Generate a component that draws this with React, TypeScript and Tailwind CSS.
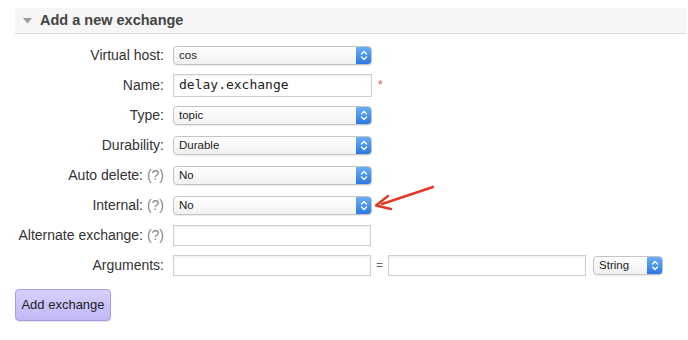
import React from "react";

const font = { fontFamily: '"Liberation Sans", Arial, sans-serif' };

function Chevrons() {
    return (
        <svg width="8" height="11" viewBox="0 0 8 11" fill="none" stroke="white" strokeWidth="1.4" strokeLinecap="round" strokeLinejoin="round">
            <path d="M1.5 4 L4 1.5 L6.5 4" />
            <path d="M1.5 7 L4 9.5 L6.5 7" />
        </svg>
    );
}

function FakeSelect({ value, width = "w-[199px]" }: { value: string; width?: string }) {
    return (
        <div className={`${width} h-[19px] flex items-stretch rounded-[4px] border border-[#c4c4c4] bg-gradient-to-b from-white to-[#f1f1f1] shadow-[0_1px_1px_rgba(0,0,0,0.08)] overflow-hidden`}>
            <div className="flex-1 pl-[5px] text-[11.5px] leading-[17px] text-[#222]">{value}</div>
            <div className="w-[15px] flex items-center justify-center bg-gradient-to-b from-[#69aef8] to-[#2a78e4]">
                <Chevrons />
            </div>
        </div>
    );
}

function TextBox({ value, width = "w-[199px]", height = "h-[21px]" }: { value?: string; width?: string; height?: string }) {
    return (
        <div className={`${width} ${height} border border-[#cfcfcf] shadow-[inset_0_1px_2px_rgba(0,0,0,0.08)] bg-white pl-[5px] flex items-center`}>
            {value && (
                <span className="text-[13px] text-[#222]" style={{ fontFamily: '"DejaVu Sans Mono", "Liberation Mono", monospace' }}>
                    {value}
                </span>
            )}
        </div>
    );
}

function Row({ label, help, children }: { label: string; help?: boolean; children: React.ReactNode }) {
    return (
        <div className="h-[30px] flex items-center">
            <div className="w-[149px] text-right text-[14px] text-[#333] whitespace-nowrap">
                {label}
                {help && <span className="text-[#888]"> (?)</span>}
            </div>
            <div className="ml-[9px] flex items-center">{children}</div>
        </div>
    );
}

export default function App() {
    return (
        <div className="relative w-[688px] h-[340px] bg-white overflow-hidden" style={font}>
            {/* Section header */}
            <div className="mt-[8px] ml-[15px] mr-[2px] h-[26px] bg-[#f6f6f6] border-b border-[#dcdcdc] flex items-center">
                <svg width="9" height="6" viewBox="0 0 9 6" className="ml-[8px]">
                    <path d="M0 0 L9 0 L4.5 5.5 Z" fill="#9a9a9a" />
                </svg>
                <span className="ml-[8px] text-[14.5px] font-bold text-[#444]">Add a new exchange</span>
            </div>

            {/* Form */}
            <div className="mt-[6px] ml-[15px]">
                <Row label="Virtual host:">
                    <FakeSelect value="cos" />
                </Row>
                <Row label="Name:">
                    <TextBox value="delay.exchange" height="h-[23px]" />
                    <span className="ml-[6px] text-[12px] text-[#e05555]">*</span>
                </Row>
                <Row label="Type:">
                    <FakeSelect value="topic" />
                </Row>
                <Row label="Durability:">
                    <FakeSelect value="Durable" />
                </Row>
                <Row label="Auto delete:" help>
                    <FakeSelect value="No" />
                </Row>
                <Row label="Internal:" help>
                    <FakeSelect value="No" />
                </Row>
                <Row label="Alternate exchange:" help>
                    <TextBox width="w-[198px]" />
                </Row>
                <Row label="Arguments:">
                    <TextBox width="w-[198px]" />
                    <span className="mx-[5px] text-[12px] text-[#666]">=</span>
                    <TextBox width="w-[198px]" />
                    <div className="ml-[7px]">
                        <FakeSelect value="String" width="w-[70px]" />
                    </div>
                </Row>

                <button className="mt-[9px] w-[96px] h-[32px] rounded-[4px] border border-[#a99ce2] bg-gradient-to-b from-[#d6d0fc] to-[#c1b8f7] text-[13px] text-[#222] shadow-[0_1px_1px_rgba(0,0,0,0.1)]">
                    Add exchange
                </button>
            </div>

            {/* Annotation arrow */}
            <svg className="absolute left-0 top-0 pointer-events-none" width="688" height="340">
                <path d="M433 187 L382 204" stroke="#e23a26" strokeWidth="2.4" strokeLinecap="round" fill="none" />
                <path d="M388 196 L376 205.5 L391 209" stroke="#e23a26" strokeWidth="2.4" strokeLinecap="round" strokeLinejoin="round" fill="none" />
            </svg>
        </div>
    );
}
